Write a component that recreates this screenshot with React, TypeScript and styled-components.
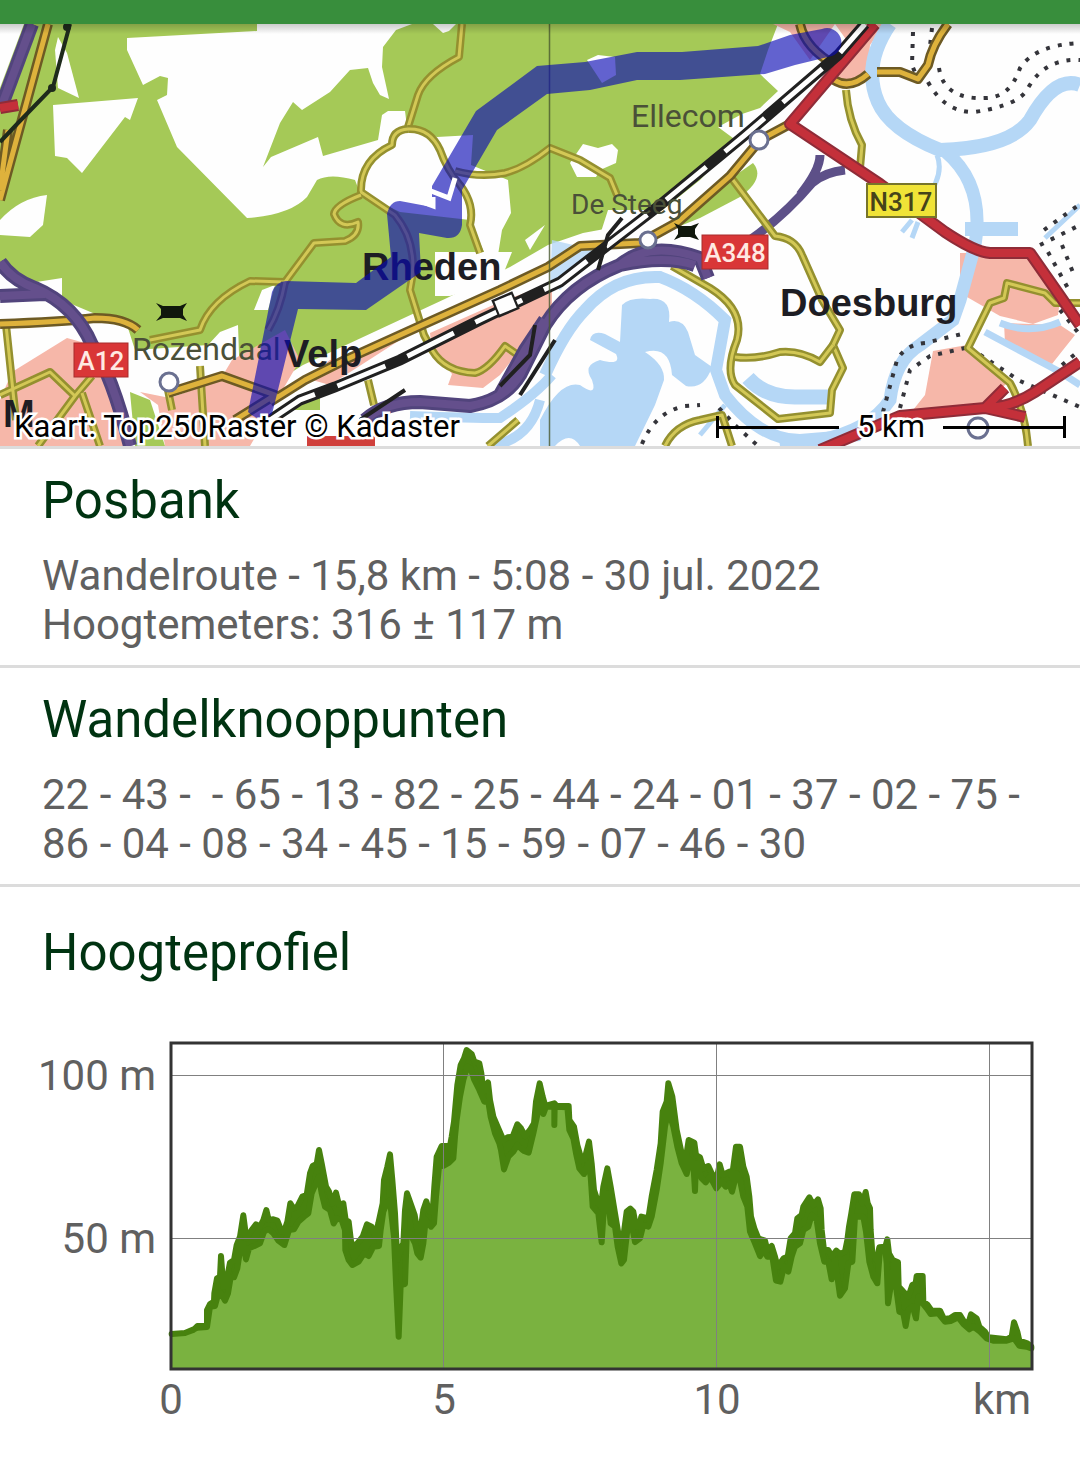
import React from "react";
import styled, { createGlobalStyle } from "styled-components";

const GlobalStyle = createGlobalStyle`
  *, *::before, *::after { box-sizing: border-box; }
  body {
    margin: 0;
    background: #ffffff;
    font-family: Roboto, "Liberation Sans", sans-serif;
  }
`;

const Screen = styled.main`
  display: flex;
  flex-direction: column;
  width: 100%;
  background: #ffffff;
`;

const StatusBar = styled.div`
  height: 24px;
  background: #388e3c;
`;

const MapPanel = styled.figure`
  position: relative;
  margin: 0;
  border-bottom: 3px solid #dcdcdc;
`;

const MapDrawing = styled.svg`
  display: block;
  width: 100%;
  height: auto;
`;

const MapShade = styled.div`
  position: absolute;
  inset: 0 0 auto 0;
  height: 10px;
  background: linear-gradient(rgba(0, 0, 0, 0.2), rgba(0, 0, 0, 0));
`;

const MapLegend = styled.figcaption`
  position: absolute;
  inset: auto 14px 0 14px;
  display: flex;
  justify-content: space-between;
  align-items: center;
  height: 38px;
  color: #000000;
  font-size: 31px;
  line-height: 38px;
`;

const HaloText = styled.span`
  -webkit-text-stroke: 5px #ffffff;
  paint-order: stroke fill;
  white-space: nowrap;
`;

const ScaleBar = styled.div`
  display: flex;
  align-items: center;
  gap: 18px;
  width: 350px;
`;

const ScaleArm = styled.span<{ $side: "left" | "right" }>`
  flex: 1;
  display: flex;
  align-items: center;
  height: 22px;
  border-${(p) => p.$side}: 3px solid #000000;

  &::after {
    content: "";
    flex: 1;
    height: 3px;
    background: #000000;
  }
`;

const Section = styled.section`
  display: flex;
  flex-direction: column;
  gap: 21px;
  padding: 22px 42px 16px;
  border-bottom: 3px solid #dcdcdc;
`;

const ProfileSection = styled.section`
  display: flex;
  flex-direction: column;
  gap: 48px;
  padding-top: 36px;
`;

const Title = styled.h2<{ $inset?: boolean }>`
  margin: 0;
  padding: 0 ${(p) => (p.$inset ? 42 : 0)}px;
  color: #003311;
  font-size: 51px;
  font-weight: 400;
  line-height: 59px;
`;

const Details = styled.p`
  margin: 0;
  color: #606060;
  font-size: 42px;
  line-height: 49px;
  white-space: pre-wrap;
`;

const Chart = styled.svg`
  display: block;
  width: 100%;
  height: auto;
`;

const AxisLabel = styled.text`
  fill: #606060;
  font-family: Roboto, "Liberation Sans", sans-serif;
  font-size: 42px;
`;

const PlaceName = styled.text<{ $bold?: boolean; $small?: boolean }>`
  fill: ${(p) => (p.$bold ? "#1d1d24" : "#4a5038")};
  font-family: ${(p) =>
    p.$bold ? '"Liberation Sans", sans-serif' : 'Roboto, "Liberation Sans", sans-serif'};
  font-weight: ${(p) => (p.$bold ? 700 : 400)};
  font-size: ${(p) => (p.$bold ? 38 : p.$small ? 28 : 32)}px;
`;

const ShieldText = styled.text<{ $dark?: boolean }>`
  fill: ${(p) => (p.$dark ? "#45431a" : "#ffe9e2")};
  font-family: Roboto, "Liberation Sans", sans-serif;
  font-weight: 500;
  font-size: 26px;
  text-anchor: middle;
`;

/* ---------- map ---------- */

const COLOR = {
  forest: "#a5c957",
  town: "#f6b7a9",
  water: "#b5d7f6",
};

type RoadKind = "motorway" | "main" | "yellow" | "lane";

const ROAD_STYLE: Record<RoadKind, { casing: string; core: string; outer: number; inner: number }> = {
  motorway: { casing: "#51447c", core: "#644f8c", outer: 14, inner: 8 },
  main: { casing: "#8f2c38", core: "#c4303a", outer: 12, inner: 8 },
  yellow: { casing: "#6d5a24", core: "#deb23c", outer: 10, inner: 5 },
  lane: { casing: "#94902f", core: "#d3c856", outer: 8, inner: 3 },
};

const ROADS: { kind: RoadKind; d: string }[] = [
  { kind: "lane", d: "M462 24 L459 57 Q425 75 418 95 L408 127" },
  { kind: "lane", d: "M408 129 Q392 130 392 145 Q360 160 361 192 L395 215 Q420 245 410 290 L424 335 L432 350 Q445 372 475 373 Q488 370 505 346 L518 355" },
  { kind: "lane", d: "M408 129 Q430 128 440 150 Q447 170 460 185 Q475 205 470 225 L480 253" },
  { kind: "lane", d: "M455 171 Q480 178 505 173 Q525 168 550 148 L580 160 L610 178 L617 195" },
  { kind: "lane", d: "M361 195 Q335 205 334 214 Q340 230 358 222 Q360 235 345 241 L314 243 L285 282 L250 281 Q210 300 200 330 L150 340" },
  { kind: "lane", d: "M285 282 Q280 310 268 330" },
  { kind: "lane", d: "M730 176 L775 236 Q795 238 802 255 L822 300 L840 330 L833 345 L843 368 L832 390 L830 413 L778 419 L735 385 Q725 370 737 340 Q745 310 710 288 L672 266" },
  { kind: "lane", d: "M735 357 Q755 360 780 352 Q800 350 820 362 L833 345" },
  { kind: "lane", d: "M846 90 Q848 120 862 145 L860 168" },
  { kind: "lane", d: "M665 446 Q675 425 700 420 L722 415 L732 446" },
  { kind: "lane", d: "M1080 303 L1055 303 L1045 293 L1007 283 L1004 298 L990 303 L968 348 L1010 383 Q1025 410 1028 446" },
  { kind: "lane", d: "M0 395 L50 372 L75 396 L92 376 M75 396 L38 446 M82 393 L100 446 M6 325 L16 420" },
  { kind: "lane", d: "M168 390 L172 410 M200 366 L205 446 M368 380 L374 405 M488 446 L518 420" },
  { kind: "yellow", d: "M0 324 Q60 322 95 318 Q125 318 138 330" },
  { kind: "yellow", d: "M168 393 L222 376 L275 395 L235 420 M270 402 L305 380 L345 360 L420 326 L500 290 L548 267 L580 246 L640 243 L678 222 L730 176 L760 140 L790 124" },
  { kind: "yellow", d: "M800 24 Q805 48 835 65 M834 80 Q850 90 868 74 M877 72 L900 72 L918 79 L928 65 Q932 45 948 24" },
  { kind: "yellow", d: "M48 24 L0 200 M8 130 L0 190" },
  { kind: "motorway", d: "M32 24 L0 110" },
  { kind: "motorway", d: "M0 262 Q12 280 35 288 Q75 305 92 345 Q112 375 130 446 M0 296 L45 294" },
  { kind: "motorway", d: "M365 420 Q385 402 420 402 L470 406 Q505 400 520 375 L545 325 Q570 285 620 265 Q665 255 695 265 M500 395 L525 350 L545 320 M620 265 Q650 240 700 258 L708 278" },
  { kind: "main", d: "M875 24 L790 124 L880 184 L945 232 Q975 252 990 253 L1030 253 L1060 296 L1080 325" },
  { kind: "main", d: "M820 450 L900 416 L985 408 Q1010 408 1035 392 L1080 362 M985 408 L1005 388 M985 408 L1025 417" },
  { kind: "main", d: "M0 108 L18 105" },
];

function Road({ kind, d }: { kind: RoadKind; d: string }) {
  const s = ROAD_STYLE[kind];
  return (
    <g fill="none" strokeLinejoin="round">
      <path d={d} stroke={s.casing} strokeWidth={s.outer} />
      <path d={d} stroke={s.core} strokeWidth={s.inner} />
    </g>
  );
}

const DIKES = [
  "M913 32 L912 65 L918 80",
  "M932 28 L929 55 M939 68 Q944 100 985 98 Q1010 98 1020 68 Q1035 45 1080 43",
  "M928 82 Q945 113 975 112 Q1020 105 1028 88 Q1045 58 1080 60",
  "M1044 230 L1080 204 M1040 245 L1080 225 M1048 252 L1070 292 M1062 245 L1074 275",
  "M883 412 L897 360 Q905 345 925 343 L966 333",
  "M900 408 L910 370 L930 356 L965 348",
  "M642 444 Q655 412 685 406 L700 405",
  "M719 408 L735 425 L758 446",
  "M970 348 L1020 381 L1080 407",
  "M1060 310 L1080 335 M1062 365 L1080 350",
];

function RouteMap() {
  return (
    <MapDrawing viewBox="0 24 1080 422" role="img" aria-label="Posbank">
      <rect x="0" y="24" width="1080" height="422" fill="#fefefe" />

      <g fill={COLOR.forest}>
        <path d="M0 24 H778 L768 50 L760 74 L778 91 L760 108 L742 114 L718 127 L737 141 L700 180 L660 212 L610 228 L583 233 L548 245 L510 267 L447 298 L303 365 L270 386 L240 384 L238 325 L220 332 L208 345 L135 350 L128 328 L100 316 L62 300 V278 L30 283 L0 262 Z" />
        <path d="M753 163 Q766 178 740 197 L700 218 L665 232 L700 200 Z" />
        <path d="M130 392 L150 400 L165 446 H135 Z" />
        <path d="M290 402 L320 390 V410 H285 Z" />
      </g>

      <g fill="#fefefe">
        <path d="M0 24 H24 L0 88 Z" />
        <path d="M58 37 L67 53 L79 98 L58 88 L55 50 Z" />
        <path d="M127 38 L257 31 V24 H412 L396 30 L383 47 L382 67 L389 99 L380 95 L373 83 L368 68 L350 70 L330 92 L302 110 L293 102 L280 123 L263 167 L271 157 L318 137 L323 156 L378 140 L382 115 L388 111 H405 L407 127 L437 137 L473 135 L471 165 L508 180 L511 213 L502 230 L498 255 L484 252 L470 220 L400 212 L360 193 L355 180 Q330 173 317 180 L307 197 Q290 215 247 218 L177 147 L157 100 L167 95 L168 78 L160 76 L143 85 L127 50 Z" />
        <path d="M53 105 L138 98 L130 120 L125 117 L82 173 L67 158 L55 156 Z" />
        <path d="M0 220 Q20 198 47 195 L43 225 L30 237 L0 235 Z" />
        <path d="M583 144 L598 148 L612 144 L618 150 L616 163 L600 170 L596 177 H577 L570 163 Z" />
        <path d="M587 60 L598 55 L615 57 L616 75 L602 83 Z" />
        <path d="M433 24 H456 L449 31 L443 33 Z" />
        <path d="M435 252 H512 L500 282 L450 296 H435 Z" />
        <path d="M525 240 L545 225 L530 250 Z M608 210 H680 L640 235 L600 235 Z" />
        <path d="M262 290 L275 285 L268 310 L254 310 Z" />
      </g>

      <g fill={COLOR.town}>
        <path d="M773 24 H885 L870 45 L868 70 L850 84 L835 82 L850 45 L835 24 L810 60 L790 32 Z" />
        <path d="M552 283 V320 L520 350 L500 375 L483 388 L448 385 L452 374 L432 350 L430 333 L500 302 Z" />
        <path d="M12 372 L67 338 L110 350 L130 446 H0 V400 Z" />
        <path d="M140 392 L170 398 L220 380 L232 360 L285 330 L300 360 L250 446 H165 L158 405 Z" />
        <path d="M305 378 L330 360 L365 355 L400 340 L330 385 Z" />
        <path d="M960 253 H1032 L1060 300 L1058 315 L1033 324 L1000 316 L960 293 Z" />
        <path d="M1004 323 L1060 325 L1075 335 L1063 350 L1052 364 L1005 343 Z" />
        <path d="M933 351 L967 345 L1007 383 L980 410 H913 L925 395 Z" />
      </g>

      <g fill={COLOR.water}>
        <path d="M622 305 Q630 297 650 299 Q672 297 669 322 Q682 318 688 332 L695 355 L712 367 Q704 390 686 386 L672 375 Q670 345 645 352 Q665 365 664 380 L655 405 L635 446 H580 Q570 430 555 446 H540 V420 Q560 380 580 385 Q598 398 592 380 Q582 365 600 360 Q622 366 616 354 L590 340 Q592 330 605 334 L620 342 Z" />
        <path d="M552 240 L595 250 L560 290 L550 285 Z" opacity="0.800" />
      </g>
      <g fill="none" stroke={COLOR.water}>
        <path d="M890 24 Q862 65 878 102 Q890 130 940 150 Q1010 148 1030 120 Q1055 75 1080 85" strokeWidth="14" />
        <path d="M946 152 Q985 185 975 245 L960 300 L953 320 L920 345 Q895 360 890 400 Q870 430 820 440 L780 446" strokeWidth="13" />
        <path d="M937 155 Q945 175 925 200 M912 220 L902 232 M918 222 L912 238 M1080 205 L1045 238" strokeWidth="5" />
        <path d="M965 229 H1018" strokeWidth="14" />
        <path d="M545 375 Q565 330 585 310 Q615 275 660 277 Q695 290 725 320 L716 370 L725 395 Q760 440 800 440 L860 435" strokeWidth="12" />
        <path d="M748 378 Q765 397 795 397 H828" strokeWidth="15" />
        <path d="M985 332 L1060 372 L1080 385 M1000 323 Q1030 335 1060 322" strokeWidth="7" />
        <path d="M410 416 Q470 418 500 418 Q535 395 552 375 M540 400 Q530 440 490 446" strokeWidth="10" />
        <path d="M700 435 L725 405" strokeWidth="5" />
      </g>

      <g fill="none" stroke="#34343a" strokeWidth="4" strokeDasharray="4 8">
        {DIKES.map((d) => (
          <path key={d} d={d} />
        ))}
      </g>

      <path
        d="M690 262 L750 240 Q785 215 812 183 Q825 172 845 170 M820 155 Q820 170 800 195"
        fill="none"
        stroke="#5d5088"
        strokeWidth="9"
      />

      {ROADS.map((r) => (
        <Road key={r.d} kind={r.kind} d={r.d} />
      ))}

      {/* railway */}
      <g fill="none">
        <path d="M270 420 L300 400 L335 387 L400 360 L480 320 L560 282 L595 255 L660 205 L745 135 L838 55 L865 24" stroke="#202020" strokeWidth="11" />
        <path d="M270 420 L300 400 L335 387 L400 360 L480 320 L560 282 L595 255 L660 205 L745 135 L838 55 L865 24" stroke="#fefefe" strokeWidth="5" strokeDasharray="52 24" />
        <path d="M495 309 L516 300" stroke="#202020" strokeWidth="19" />
        <path d="M497 308 L514 301" stroke="#fefefe" strokeWidth="14" />
        <path d="M598 270 L608 235 L622 218 M500 386 L530 355 L535 325 M520 395 L555 340 M360 420 L405 390" stroke="#202020" strokeWidth="4" />
      </g>

      <path d="M70 24 L53 87 L18 123 L0 142" fill="none" stroke="#1e2a1c" strokeWidth="4" />
      <circle cx="67" cy="27" r="4" fill="#1e2a1c" />
      <circle cx="52" cy="88" r="4" fill="#1e2a1c" />
      <path d="M549.500 24 V446" stroke="#4a5a30" strokeWidth="1.500" opacity="0.800" />

      <g fill="#fefefe" stroke="#6a7090" strokeWidth="3">
        <circle cx="759" cy="140" r="9" />
        <circle cx="648" cy="240" r="8" />
        <circle cx="169" cy="382" r="9" />
        <circle cx="978" cy="428" r="10" />
      </g>
      <g fill="#10180c">
        <path d="M156 303 L163 306 H180 L187 303 L183 309 V315 L187 321 L180 318 H163 L156 321 L161 315 V309 Z" />
        <path d="M674 223 L681 226 H691 L699 223 L695 229 V234 L699 240 L690 237 H681 L674 240 L678 234 V229 Z" />
      </g>

      <PlaceName x="631" y="127">Ellecom</PlaceName>
      <PlaceName x="571" y="214" $small>De Steeg</PlaceName>
      <PlaceName x="132" y="360">Rozendaal</PlaceName>
      <PlaceName x="362" y="280" $bold>Rheden</PlaceName>
      <PlaceName x="284" y="367" $bold>Velp</PlaceName>
      <PlaceName x="780" y="316" $bold>Doesburg</PlaceName>
      <PlaceName x="3" y="427" $bold>M</PlaceName>

      <rect x="74" y="343" width="54" height="34" fill="#d93637" stroke="#a82c2c" />
      <ShieldText x="101" y="370">A12</ShieldText>
      <rect x="702" y="235" width="66" height="34" fill="#d93637" stroke="#a82c2c" />
      <ShieldText x="735" y="262">A348</ShieldText>
      <rect x="867" y="184" width="69" height="33" fill="#f0e337" stroke="#77752a" strokeWidth="2" />
      <ShieldText x="901" y="211" $dark>N317</ShieldText>
      <rect x="307" y="436" width="68" height="10" fill="#d0403c" />

      {/* walking route */}
      <path
        d="M248 412 L272 292 Q276 282 286 281 L356 283 L391 257 L387 214 Q390 201 400 201 L432 207 L432 186 L476 111 L537 66 L585 62 L637 52 L682 52 L758 46 L790 35 L822 29 A14 14 0 0 1 832 56 L795 65 L765 74 L680 80 L637 80 L590 90 L547 94 L497 130 L462 190 V225 Q460 239 447 238 L419 233 L421 272 L366 310 L298 309 L272 414 Q260 424 248 412 Z"
        fill="#0a0ab4"
        fillOpacity="0.640"
      />
      <path d="M431 191 L449 198 L455 178 M425 203 L433 206 V197" fill="none" stroke="#ffffff" strokeWidth="5" />
    </MapDrawing>
  );
}

/* ---------- elevation profile ---------- */

/* Highest and lowest samples along the track, in thirds of a chart unit. */
const CREST = `35,912 75,909 100,900 112,888 141,888 141,840 150,822 162,815 163,790 171,745 180,740 183,678 190,770 197,765
210,698 222,690 230,645 240,620 250,556 259,625 275,600 288,583 300,590 310,570 319,540 326,570 340,568 352,572 365,605 373,602
382,575 391,520 400,535 412,530 427,500 440,495 450,430 458,408 470,402 477,360 485,400 498,470 507,485 518,520 528,488 537,525
550,520 557,570 566,575 575,650 592,640 608,620 621,583 635,590 645,620 655,580 668,520 672,450 682,410 690,373 697,450 705,550
712,690 722,655 730,640 735,540 741,490 750,515 764,555 775,620 782,600 790,540 799,514 808,545 818,545 823,470 830,380 845,348
870,348 875,320 882,275 892,165 902,105 912,85 920,60 935,72 943,95 958,100 964,130 970,185 984,157 990,210 1000,260 1015,295
1030,330 1043,322 1058,320 1072,283 1083,295 1095,318 1110,300 1122,280 1128,215 1139,160 1148,200 1156,228 1183,220 1190,228
1226,228 1228,270 1242,290 1252,345 1265,390 1273,390 1287,335 1295,400 1302,480 1315,520 1323,530 1330,470 1342,415 1352,470
1365,550 1375,610 1390,620 1400,545 1411,536 1420,545 1428,590 1437,590 1444,560 1465,565 1475,500 1490,420 1502,340 1508,245
1520,215 1525,160 1537,200 1550,300 1565,370 1576,395 1586,330 1603,338 1608,375 1620,382 1630,415 1645,408 1655,430 1669,450
1679,403 1688,435 1708,425 1716,440 1728,350 1740,350 1750,410 1760,440 1768,500 1773,560 1783,595 1795,625 1815,632 1822,660
1835,648 1845,680 1853,710 1871,685 1883,680 1892,625 1905,610 1912,565 1925,555 1930,530 1948,502 1960,525 1974,508 1982,535
1985,600 1992,660 2005,660 2015,680 2029,662 2040,672 2055,665 2062,630 2067,590 2074,550 2083,493 2097,493 2107,520 2117,486
2123,520 2130,535 2132,600 2137,670 2150,690 2158,652 2176,650 2182,628 2187,670 2198,690 2214,697 2216,770 2230,785 2245,800
2257,765 2267,760 2270,738 2288,738 2290,815 2303,825 2315,842 2340,842 2352,867 2370,865 2385,855 2400,855 2412,875 2425,880
2433,853 2450,865 2458,890 2475,905 2485,922 2540,928 2555,920 2562,877 2572,905 2578,932 2602,940 2614,950`;

const TROUGH = `35,912 75,909 112,893 141,891 150,830 165,828 175,790 183,790 195,812 204,790 212,742 222,742 232,715 242,650
250,640 258,688 267,655 285,647 300,640 312,605 325,597 340,610 355,632 373,645 387,600 402,598 415,575 432,560 445,550 455,490
470,455 477,440 485,490 495,530 510,540 521,580 530,565 545,570 555,600 556,660 566,690 577,705 596,695 612,670 626,678 640,650
657,648 662,600 670,545 680,520 690,510 695,560 702,620 708,760 716,920 722,765 735,762 740,620 750,610 765,640 772,670 782,683
790,640 797,570 813,590 822,580 828,500 838,400 850,408 867,398 880,385 885,320 890,270 900,200 910,150 922,110 932,115 943,150
958,180 973,215 985,215 992,260 1005,310 1018,340 1023,360 1032,418 1045,380 1060,365 1072,345 1090,362 1106,368 1120,310
1135,240 1141,225 1150,252 1158,230 1183,230 1183,285 1184,230 1222,232 1228,300 1240,325 1248,370 1258,415 1272,432 1285,400
1292,440 1298,530 1315,550 1325,637 1332,530 1342,490 1352,580 1365,590 1373,650 1384,700 1392,690 1402,600 1411,570 1418,600
1425,636 1440,625 1450,585 1465,590 1475,560 1490,480 1502,400 1515,290 1525,240 1540,290 1552,350 1565,400 1580,432 1590,390
1600,400 1605,483 1608,400 1625,445 1637,457 1650,440 1669,475 1685,455 1697,470 1708,460 1716,485 1730,430 1740,450 1750,500
1762,530 1770,605 1785,640 1800,678 1812,660 1822,680 1837,680 1848,752 1861,755 1872,710 1885,725 1895,680 1905,650 1920,640
1930,600 1945,590 1955,555 1970,570 1980,640 1993,695 2005,695 2015,748 2025,690 2032,740 2040,797 2055,775 2065,700 2077,695
2085,560 2110,560 2118,605 2128,695 2140,740 2152,760 2160,660 2176,660 2180,700 2184,820 2192,770 2202,700 2208,770 2218,845
2230,850 2237,888 2245,840 2258,830 2268,865 2275,800 2288,820 2300,835 2312,852 2335,850 2355,875 2372,873 2395,862 2410,882
2428,898 2440,890 2460,905 2480,925 2500,932 2540,932 2562,925 2578,947 2600,950 2614,955`;

const toPoints = (samples: string) => samples.trim().split(/\s+/);
const crest = toPoints(CREST);
const trough = toPoints(TROUGH);
const areaPoints = [...crest, "2616,1017", "33,1017"].join(" ");
const bandPoints = [...crest, ...trough.slice().reverse()].join(" ");

function ElevationChart() {
  return (
    <Chart viewBox="0 1030 1080 400" role="img" aria-label="Hoogteprofiel">
      <g transform="translate(160 1030) scale(0.333333)">
        <polygon points={areaPoints} fill="#7ab240" />
        <polygon points={bandPoints} fill="#47820e" stroke="#47820e" strokeWidth="18" strokeLinejoin="round" />
      </g>
      <path
        d="M171 1075.500 H1032 M171 1238.500 H1032 M443.500 1043 V1369 M716.500 1043 V1369 M989.500 1043 V1369"
        stroke="#808080"
        strokeWidth="1"
      />
      <rect x="171" y="1043" width="861" height="326" fill="none" stroke="#333333" strokeWidth="3" />
      <AxisLabel x="156" y="1090" textAnchor="end">100 m</AxisLabel>
      <AxisLabel x="156" y="1253" textAnchor="end">50 m</AxisLabel>
      <AxisLabel x="171" y="1414" textAnchor="middle">0</AxisLabel>
      <AxisLabel x="444" y="1414" textAnchor="middle">5</AxisLabel>
      <AxisLabel x="717" y="1414" textAnchor="middle">10</AxisLabel>
      <AxisLabel x="1031" y="1414" textAnchor="end">km</AxisLabel>
    </Chart>
  );
}

export default function App() {
  return (
    <>
      <GlobalStyle />
      <Screen>
        <StatusBar />
        <MapPanel>
          <RouteMap />
          <MapShade />
          <MapLegend>
            <HaloText>Kaart: Top250Raster © Kadaster</HaloText>
            <ScaleBar>
              <ScaleArm $side="left" />
              <HaloText>5 km</HaloText>
              <ScaleArm $side="right" />
            </ScaleBar>
          </MapLegend>
        </MapPanel>
        <Section>
          <Title>Posbank</Title>
          <Details>
            Wandelroute - 15,8 km - 5:08 - 30 jul. 2022{"\n"}Hoogtemeters: 316 ± 117 m
          </Details>
        </Section>
        <Section>
          <Title>Wandelknooppunten</Title>
          <Details>
            {"22 - 43 -  - 65 - 13 - 82 - 25 - 44 - 24 - 01 - 37 - 02 - 75 - 86 - 04 - 08 - 34 - 45 - 15 - 59 - 07 - 46 - 30"}
          </Details>
        </Section>
        <ProfileSection>
          <Title $inset>Hoogteprofiel</Title>
          <ElevationChart />
        </ProfileSection>
      </Screen>
    </>
  );
}
